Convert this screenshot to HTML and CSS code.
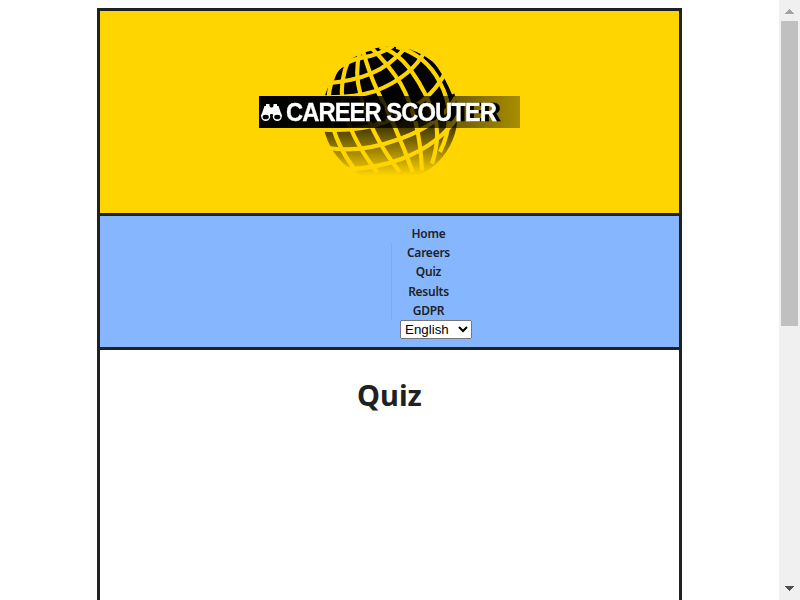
FILE: index.html
```html
<!DOCTYPE html>
<html lang="en">
<head>
<meta charset="utf-8">
<title>Career Scouter - Quiz</title>
<link rel="stylesheet" href="styles.css">
</head>
<body>
<div class="viewport">
  <div class="page">
    <header class="banner">
      <svg class="logo" width="262" height="138" viewBox="0 0 262 138" role="img" aria-label="Career Scouter">
        <defs>
          <linearGradient id="fade" gradientUnits="userSpaceOnUse" x1="0" y1="14" x2="0" y2="402">
            <stop offset="0" stop-color="#000"/>
            <stop offset=".4" stop-color="#000"/>
            <stop offset=".64" stop-color="#000" stop-opacity=".7"/>
            <stop offset=".82" stop-color="#000" stop-opacity=".35"/>
            <stop offset="1" stop-color="#000" stop-opacity="0"/>
          </linearGradient>
          <linearGradient id="bar" x1="0" x2="1" y1="0" y2="0">
            <stop offset="0" stop-color="#000"/>
            <stop offset=".3" stop-color="#000" stop-opacity=".97"/>
            <stop offset="1" stop-color="#000" stop-opacity=".34"/>
          </linearGradient>
          <clipPath id="ball"><circle cx="216" cy="216" r="207"/></clipPath>
        </defs>
        <g transform="translate(59 0) scale(.33333)">
          <circle cx="216" cy="217" r="203" fill="url(#fade)"/>
          <g class="grid" clip-path="url(#ball)">
            <path d="M35 115Q80 35 165 18"/>
            <path d="M60 77Q95 54 135 46Q180 40 225 12"/>
            <path d="M25 124Q110 116 160 94Q216 72 265 14"/>
            <path d="M12 166Q110 168 170 148Q282 104 322 25"/>
            <path d="M10 262Q120 270 200 240Q315 195 365 120Q385 92 384 75"/>
            <path d="M30 318Q126 334 245 291Q370 246 414 165"/>
            <path d="M70 381Q160 384 250 351Q370 305 425 215"/>
            <path d="M55 80Q22 150 36 218Q52 310 115 388"/>
            <path d="M92 52Q64 120 74 180Q92 280 178 392"/>
            <path d="M126 30Q108 90 128 160Q158 280 245 390"/>
            <path d="M136 30Q155 98 180 150Q235 255 284 390"/>
            <path d="M160 18Q212 68 248 125Q305 225 312 385"/>
            <path d="M185 15Q240 30 282 90Q325 150 350 225Q368 285 342 365"/>
            <path d="M235 14Q325 40 365 120Q420 220 366 330"/>
            <path d="M318 22Q370 65 408 155"/>
          </g>
        </g>
        <rect y="54" width="261" height="32" fill="url(#bar)"/>
        <g fill="#fff" transform="translate(2 61)">
          <path d="M5 1h3.500v2l1 1.500h2l1-1.500V1H16v2h1.500l3.500 10-2 1h-6l-1.500-3h-2L8 14H2l-2-1L3.500 3H5z"/>
          <circle cx="4.700" cy="13.500" r="4.500"/><circle cx="16.300" cy="13.500" r="4.500"/>
          <ellipse cx="4.700" cy="14" rx="3.100" ry="2.300" fill="#000"/><ellipse cx="16.300" cy="14" rx="3.100" ry="2.300" fill="#000"/>
        </g>
        <text class="brand" x="27" y="79" textLength="210" lengthAdjust="spacingAndGlyphs">CAREER SCOUTER</text>
      </svg>
    </header>
    <nav class="nav">
      <ul class="menu">
        <li>Home</li>
        <li class="ruled">Careers</li>
        <li class="ruled">Quiz</li>
        <li class="ruled">Results</li>
        <li class="ruled">GDPR</li>
      </ul>
      <select class="language" aria-label="Language"><option>English</option></select>
    </nav>
    <main><h1>Quiz</h1></main>
  </div>
  <div class="scrollbar">
    <svg width="21" height="21" shape-rendering="crispEdges"><path d="M10.500 9L15 14H6z" fill="#a3a3a3"/></svg>
    <div class="thumb"></div>
    <svg class="down" width="21" height="21" shape-rendering="crispEdges"><path d="M6 7h9l-4.500 5z" fill="#505050"/></svg>
  </div>
</div>
</body>
</html>
```
FILE: styles.css
```css
* { box-sizing: border-box; }
body { margin: 0; overflow: hidden; background: #fff; color: #1f2223; font-family: "Noto Sans", sans-serif; }
.viewport { display: flex; height: 600px; overflow: hidden; }
.page { width: 585px; height: 700px; margin: 8px auto 0; border: 3px solid #1f2223; flex: none; }
.banner { height: 205px; padding: 31px 0 0 159px; background: #ffd500; border-bottom: 3px solid #1f2223; }
.logo { display: block; }
.grid { fill: none; stroke: #ffd500; stroke-width: 12.5; }
.brand { font: bold 25px "Liberation Sans", sans-serif; letter-spacing: -1px; fill: #fff; stroke: #fff; stroke-width: .3; filter: drop-shadow(4px 0 0 #000); }
.nav { height: 134px; padding: 8px 0 0 291px; background: #86b7fe; border-bottom: 3px solid #1f2223; }
.menu { list-style: none; width: 74px; margin: 0; padding: 0; font-size: 12px; font-weight: 600; line-height: 19.2px; letter-spacing: -.25px; text-align: center; }
.menu li { border-left: 1px solid transparent; }
.menu .ruled { border-left-color: #7baaf0; }
.language { display: block; width: 72px; height: 19px; margin-left: 9px; padding: 0; font: 13.333px "Liberation Sans", sans-serif; }
h1 { margin: 21px 0 0; text-align: center; font-size: 29px; font-weight: 700; line-height: 48px; }
.scrollbar { display: flex; flex-direction: column; width: 21px; height: 600px; background: #f0f0f0; flex: none; }
.scrollbar svg { display: block; flex: none; }
.thumb { width: 17px; height: 305px; margin-left: 2px; background: #c0c0c0; }
.down { margin-top: auto; }
```
